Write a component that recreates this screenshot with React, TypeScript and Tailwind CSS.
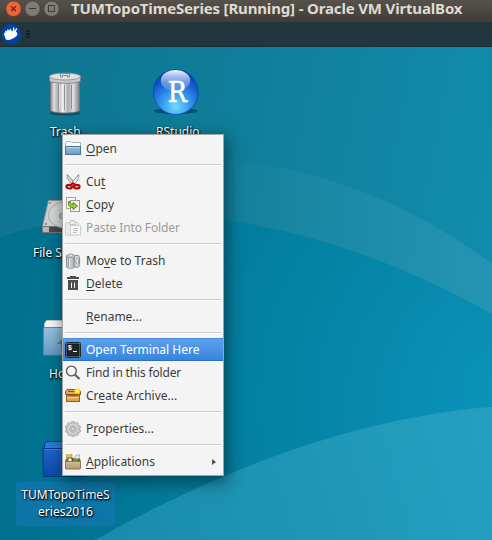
import React from "react";

type IconName =
  | "open" | "cut" | "copy" | "paste" | "trash" | "delete" | "none"
  | "terminal" | "find" | "archive" | "gear" | "apps";

type Entry = {
  icon: IconName;
  // text before the mnemonic, the mnemonic letter, and the text after it
  label: [string, string, string];
  disabled?: boolean;
  selected?: boolean;
  submenu?: boolean;
  tracking?: string;
};

const groups: Entry[][] = [
  [{ icon: "open", label: ["", "O", "pen"] }],
  [
    { icon: "cut", label: ["Cu", "t", ""] },
    { icon: "copy", label: ["", "C", "opy"] },
    { icon: "paste", label: ["Paste Into Folder", "", ""], disabled: true, tracking: "tracking-[-0.12px]" },
  ],
  [
    { icon: "trash", label: ["Mo", "v", "e to Trash"] },
    { icon: "delete", label: ["", "D", "elete"] },
  ],
  [{ icon: "none", label: ["", "R", "ename..."] }],
  [
    { icon: "terminal", label: ["Open Terminal Here", "", ""], selected: true },
    { icon: "find", label: ["Find in this folder", "", ""], tracking: "tracking-[-0.16px]" },
    { icon: "archive", label: ["Cr", "e", "ate Archive..."] },
  ],
  [{ icon: "gear", label: ["P", "r", "operties..."] }],
  [{ icon: "apps", label: ["", "A", "pplications"], submenu: true }],
];

const teeth = [0, 36, 72, 108, 144, 180, 216, 252, 288, 324];

function MenuIcon({ name }: { name: IconName }) {
  return (
    <svg viewBox="0 0 16 16" className="h-4 w-4 shrink-0">
      {name === "open" && (
        <g>
          <path d="M.5 13.5V2.5L1.5 .5H5.5L6.5 1.5H15.5V13.5Z" fill="#fafafa" stroke="#a9afb4" />
          <rect x=".5" y="5.5" width="15" height="8" fill="url(#m-blue)" stroke="#4d7695" />
          <path d="M1.5 6.5H14.5" stroke="#b5d3e8" />
        </g>
      )}
      {name === "cut" && (
        <g>
          <path d="M2.4 .6C1.6 3 3 6 7 10.4L9 8.2Z" fill="#dcdedb" stroke="#7d8082" strokeWidth=".9" />
          <path d="M13.6 .6C14.4 3 13 6 9 10.4L7 8.2Z" fill="#f0f1ef" stroke="#7d8082" strokeWidth=".9" />
          <path d="M5.5 11L8 9.2L10.500 11" fill="none" stroke="#a80808" strokeWidth="1.8" />
          <ellipse cx="4.2" cy="12.700" rx="2.800" ry="1.800" fill="#e9c9c9" stroke="#b00a0a" strokeWidth="2.1" />
          <ellipse cx="11.800" cy="12.700" rx="2.800" ry="1.800" fill="#e9c9c9" stroke="#b00a0a" strokeWidth="2.1" />
        </g>
      )}
      {name === "copy" && (
        <g>
          <rect x="1.5" y=".5" width="9" height="11" fill="#f8f8f8" stroke="#a5a7a3" />
          <rect x="5.5" y="3.5" width="9" height="11" fill="#f1f1f1" stroke="#999b97" />
          <path d="M3.5 4.5C3 8 4 10.5 8 10.5V12.5L12.5 9L8 5.5V7.5C5.8 7.5 5 6.5 5 4.5Z" fill="#9bd030" stroke="#4a8403" strokeWidth=".9" />
        </g>
      )}
      {name === "paste" && (
        <g opacity=".5">
          <rect x=".5" y="2.5" width="13" height="12.5" rx="1" fill="#ddd" stroke="#a8a8a8" />
          <path d="M4.5 4.5V2.5H5.5V.5H9.5V2.5H10.5V4.5Z" fill="#eee" stroke="#999" />
          <rect x="5.5" y="5.5" width="10" height="9.5" fill="#fafafa" stroke="#aaa" />
          <path d="M8 8.500H13M8 10.500H13M8 12.500H11.500" stroke="#888" />
        </g>
      )}
      {name === "trash" && (
        <g>
          <path d="M1.5 4V14C2 15.7 9 15.7 10 14V4Z" fill="url(#m-can)" stroke="#85888c" strokeWidth=".9" />
          <path d="M3.5 5V14M6 5V14.5M8 5V14" stroke="#8c8f93" strokeWidth=".8" />
          <path d="M1 4L1.5 2.3H4V1H7.5V2.3H10V4Z" fill="#e7e9eb" stroke="#85888b" strokeWidth=".8" />
          <rect x="9.2" y="2.2" width="5.4" height="12.2" rx="2.7" fill="#d8dadd" stroke="#7c8084" strokeWidth=".9" />
          <rect x="11" y="5.2" width="2.4" height="6" rx="1.2" fill="#f4f4f4" stroke="#888" strokeWidth=".8" />
        </g>
      )}
      {name === "delete" && (
        <g fill="#4d4d4d">
          <path d="M2 1H5V0H11V1H14V3H2Z" />
          <path fillRule="evenodd" d="M3 4H13V14H3ZM6 6.500V12H7V6.500ZM9 6.500V12H10V6.500Z" />
        </g>
      )}
      {name === "terminal" && (
        <g>
          <rect x=".5" y=".5" width="15" height="15" rx="1" fill="#9ca1a2" stroke="#23282b" />
          <rect x="2" y="2" width="12" height="12" fill="#20282b" stroke="#0c1012" />
          <text x="2.7" y="8.2" fontSize="7" fontWeight="700" fontFamily="Liberation Mono, monospace" fill="#fff">$</text>
          <path d="M8 9.500H12" stroke="#fff" />
        </g>
      )}
      {name === "find" && (
        <g fill="none" stroke="#5b5b5b">
          <circle cx="6.400" cy="6" r="4.900" strokeWidth="1.400" />
          <path d="M10 9.700L14.500 14" strokeWidth="2" />
        </g>
      )}
      {name === "archive" && (
        <g>
          <rect x="1.500" y="6" width="13" height="7.500" fill="url(#m-box)" stroke="#985d18" />
          <path d="M.5 6.500V3.500L2 1.500H14L15.500 3.500V6.500Z" fill="#e0a95b" stroke="#8f5513" />
          <path d="M3 3.500H13" stroke="#8a5a20" />
          <path d="M2.500 7.800H13.500" stroke="#814b0e" strokeWidth="1.200" />
          <path d="M2.500 9.500H13.500" stroke="#f3d6a4" />
          <circle cx="12.300" cy="3" r="3.600" fill="url(#m-glow)" />
        </g>
      )}
      {name === "gear" && (
        <g>
          {teeth.map((a) => (
            <rect key={a} x="6.700" y=".400" width="2.600" height="3.400" rx=".5" fill="#d5d5d5" stroke="#969696" strokeWidth=".8" transform={`rotate(${a} 8 8)`} />
          ))}
          <circle cx="8" cy="8" r="5.900" fill="#d8d8d8" stroke="#a5a5a5" strokeWidth=".5" />
          <circle cx="8" cy="8" r="3.500" fill="#c6c6c6" stroke="#acacac" strokeWidth=".8" />
          <circle cx="8" cy="8" r="1.500" fill="#f2f2f2" stroke="#999" strokeWidth=".8" />
        </g>
      )}
      {name === "apps" && (
        <g>
          <path d="M.5 8L1.500 4.500H14.500L15.500 8Z" fill="#655a3d" stroke="#746342" />
          <path d="M1.500 6V.5H3L4 1.500L5 .5H7V6Z" fill="#e5c42d" stroke="#a88913" strokeWidth=".6" />
          <rect x="3" y="4" width="4" height="4" fill="#fafafa" stroke="#3d3b45" strokeWidth=".8" />
          <path d="M9 5L11 1.200L14.500 .800L14 5Z" fill="#ececec" stroke="#999" strokeWidth=".7" />
          <path d="M8 7V5H13.500V7Z" fill="#67b829" stroke="#397411" strokeWidth=".6" />
          <rect x=".5" y="7.500" width="15" height="7.500" rx=".6" fill="url(#m-bag)" stroke="#8b744f" />
        </g>
      )}
    </svg>
  );
}

function MenuRow({ entry }: { entry: Entry }) {
  const [before, key, after] = entry.label;
  const tone = entry.selected
    ? "border-y border-[#2a6fc4] border-t-[#4b8ddc] bg-linear-to-b from-[#5ba0ea] to-[#3884dd] text-white"
    : entry.disabled
      ? "text-[#9b9b9b]"
      : "text-[#3c3c3c]";
  return (
    <div className={"flex h-[23px] items-center pl-0.5 pr-[7px] " + tone}>
      <MenuIcon name={entry.icon} />
      <span className={"ml-[5px] grow whitespace-pre leading-4 " + (entry.tracking ?? "")}>
        {before}
        <span className="underline decoration-1 underline-offset-2">{key}</span>
        {after}
      </span>
      {entry.submenu && (
        <svg viewBox="0 0 4 6" className="h-1.5 w-1"><path d="M0 0L4 3L0 6Z" fill="#555" /></svg>
      )}
    </div>
  );
}

function ContextMenu() {
  return (
    <div className="absolute left-[62px] top-[87px] h-[342px] w-[162px] border border-[#a3a5a5] bg-[#f4f4f4] py-0.5 shadow-[2px_5px_14px_2px_rgba(0,25,35,0.5)]">
      {groups.map((group, i) => (
        <React.Fragment key={i}>
          {i > 0 && (
            <div className="flex h-2.5 flex-col px-0.5 pt-1">
              <div className="h-px bg-[#cbcbcb]" />
              <div className="h-px bg-white" />
            </div>
          )}
          {group.map((entry) => <MenuRow key={entry.icon} entry={entry} />)}
        </React.Fragment>
      ))}
    </div>
  );
}

function Gradients() {
  return (
    <svg className="absolute h-0 w-0">
      <defs>
        <linearGradient id="m-blue" x2="0" y2="1"><stop stopColor="#9ac3df" /><stop offset="1" stopColor="#659bc3" /></linearGradient>
        <linearGradient id="m-can"><stop stopColor="#b6babd" /><stop offset=".5" stopColor="#f3f3f4" /><stop offset="1" stopColor="#b2b5b9" /></linearGradient>
        <linearGradient id="m-box" x2="0" y2="1"><stop stopColor="#efc587" /><stop offset="1" stopColor="#d9983f" /></linearGradient>
        <linearGradient id="m-bag" x2="0" y2="1"><stop stopColor="#d3bd97" /><stop offset="1" stopColor="#b59a70" /></linearGradient>
        <radialGradient id="m-glow"><stop stopColor="#fffbb0" /><stop offset=".55" stopColor="#fbe51c" /><stop offset="1" stopColor="#fbe51c" stopOpacity="0" /></radialGradient>
      </defs>
    </svg>
  );
}

function Wallpaper() {
  return (
    <svg viewBox="0 47 492 493" className="absolute inset-0 h-full w-full">
      <defs>
        <linearGradient id="w-top" gradientUnits="userSpaceOnUse" x1="0" y1="130" x2="492" y2="220"><stop stopColor="#0e7590" /><stop offset=".5" stopColor="#107f9b" /><stop offset="1" stopColor="#128cac" /></linearGradient>
        <radialGradient id="w-low" gradientUnits="userSpaceOnUse" cx="530" cy="400" r="540"><stop stopColor="#0b95bd" /><stop offset=".45" stopColor="#0583a5" /><stop offset="1" stopColor="#00708c" /></radialGradient>
        <linearGradient id="w-band" gradientUnits="userSpaceOnUse" x1="210" y1="0" x2="492" y2="0"><stop stopColor="#fff" stopOpacity="0" /><stop offset=".3" stopColor="#fff" stopOpacity=".035" /><stop offset="1" stopColor="#fff" stopOpacity=".075" /></linearGradient>
        <linearGradient id="w-hill" gradientUnits="userSpaceOnUse" x1="95" y1="540" x2="492" y2="430"><stop stopColor="#198baa" /><stop offset="1" stopColor="#259fc0" /></linearGradient>
      </defs>
      <rect y="47" width="492" height="493" fill="url(#w-top)" />
      <path d="M100 180C180 158 250 160 300 172C370 189 436 222 492 264V320H100Z" fill="url(#w-band)" />
      <path d="M0 237C70 214 150 211 224 220C320 233 412 269 492 314V540H0Z" fill="url(#w-low)" />
      <path d="M95 540C205 478 345 418 492 407V540Z" fill="url(#w-hill)" />
    </svg>
  );
}

const caption = "whitespace-nowrap text-white [text-shadow:1px_1px_2px_#000,0_1px_2px_rgba(0,0,0,0.8)]";

function Desktop() {
  return (
    <main className="relative grow overflow-hidden">
      <Wallpaper />
      <svg viewBox="0 0 34 44" className="absolute left-12 top-[25px] h-11 w-[34px]">
        <defs>
          <linearGradient id="d-can"><stop stopColor="#85868e" /><stop offset=".12" stopColor="#dedee2" /><stop offset=".27" stopColor="#a6a6ad" /><stop offset=".42" stopColor="#f2f2f3" /><stop offset=".6" stopColor="#aaaab0" /><stop offset=".8" stopColor="#d9d9dc" /><stop offset="1" stopColor="#7c7c84" /></linearGradient>
        </defs>
        <ellipse cx="17" cy="41.5" rx="15.5" ry="2" fill="#042c38" opacity=".5" />
        <path d="M2.5 8V38C3 42 31 42 31.500 38V8Z" fill="url(#d-can)" stroke="#73747a" strokeWidth=".8" />
        <path d="M10.500 13V37M16.500 13V38M23.500 13V37" stroke="#8e8e95" />
        <path d="M11.500 13V37M17.500 13V38M24.500 13V37" stroke="#e9e9ec" strokeWidth=".8" />
        <path d="M1.500 4V9C5 12 29 12 32.500 9V4Z" fill="#c9c9cd" stroke="#787980" strokeWidth=".8" />
        <ellipse cx="17" cy="4.500" rx="15.500" ry="3.500" fill="#e0e0e2" stroke="#898a8e" strokeWidth=".8" />
        <path d="M12.500 5V1.500H21.500V5H19.500V3.500H14.500V5Z" fill="#ddd" stroke="#777" strokeWidth=".8" />
      </svg>
      <span className={"absolute left-[50px] top-[77px] " + caption}>Trash</span>
      <svg viewBox="0 0 50 48" className="absolute left-[151px] top-5 h-12 w-[50px]">
        <defs>
          <radialGradient id="d-r" cx=".5" cy=".83" r=".8"><stop stopColor="#72dbff" /><stop offset=".4" stopColor="#3398ed" /><stop offset=".8" stopColor="#1353cc" /><stop offset="1" stopColor="#0735ac" /></radialGradient>
          <linearGradient id="d-shine" x2="0" y2="1"><stop stopColor="#fff" stopOpacity=".95" /><stop offset="1" stopColor="#9ac0ef" stopOpacity=".2" /></linearGradient>
        </defs>
        <ellipse cx="25" cy="44" rx="22" ry="3" fill="#064b69" />
        <circle cx="24.700" cy="25" r="22.500" fill="url(#d-r)" stroke="#0a49ba" strokeWidth=".8" />
        <ellipse cx="24.500" cy="13.500" rx="14.700" ry="10.500" fill="url(#d-shine)" />
        <text x="16.700" y="34.500" fontSize="27" fontFamily="DejaVu Serif, serif" textLength="19" lengthAdjust="spacingAndGlyphs" fill="#fff" stroke="#fff" strokeWidth=".6">R</text>
      </svg>
      <span className={"absolute left-[156px] top-[77px] " + caption}>RStudio</span>
      <svg viewBox="0 0 48 36" className="absolute left-[42px] top-[152px] h-9 w-12">
        <path d="M6.500 1.500H41L47 27.500V33.500H.5V27.500Z" fill="#d1d1d1" stroke="#929292" />
        <path d="M.5 27.500H47V33.500H.5Z" fill="#474747" stroke="#777" />
        <path d="M1 28V33H7V28Z" fill="#b8b8b8" />
        <ellipse cx="23" cy="16" rx="16.500" ry="13" fill="#d8d8d8" stroke="#aaa" />
        <ellipse cx="21" cy="17" rx="4" ry="3" fill="#bbb" stroke="#999" />
        <circle cx="4" cy="25" r="1" fill="#777" />
        <circle cx="8" cy="4" r="1" fill="#888" />
      </svg>
      <span className={"absolute left-[33px] top-[198px] " + caption}>File System</span>
      <svg viewBox="0 0 48 38" className="absolute left-[42px] top-[273px] h-[38px] w-12">
        <path d="M2.500 8V3.500L4.500 .5H25L27 3.500H46V8Z" fill="#f7f7f7" stroke="#bfc5c8" />
        <path d="M1.500 7.500H46.500V35H1.500Z" fill="url(#m-blue)" stroke="#5b88aa" />
        <path d="M15 24L24 15L33 24H29V31H19V24Z" fill="#477da2" />
      </svg>
      <span className={"absolute left-[49px] top-[319px] " + caption}>Home</span>
      <svg viewBox="0 0 48 38" className="absolute left-[42px] top-[394px] h-[38px] w-12">
        <defs><linearGradient id="d-fold" x2="0" y2="1"><stop stopColor="#1d65cb" /><stop offset="1" stopColor="#0d48ac" /></linearGradient></defs>
        <path d="M2.500 8V3.500L4.500 .5H25L27 3.500H44V8Z" fill="#287bd6" stroke="#0b3c83" />
        <path d="M.8 7.500H44.500V35.500H1.500Z" fill="url(#d-fold)" stroke="#06387f" />
        <path d="M2 8.500H44" stroke="#3a80dd" />
      </svg>
      <div className={"absolute left-4 top-[435px] flex h-11 w-[99px] flex-col items-center rounded-[3px] bg-[#0f75ab]/90 pt-1 leading-[17px] " + caption}>
        <span>TUMTopoTimeS</span>
        <span>eries2016</span>
      </div>
      <ContextMenu />
    </main>
  );
}

function WindowBar() {
  return (
    <header className="flex h-[22px] shrink-0 items-center overflow-hidden bg-linear-to-b from-[#56524b] to-[#403d38] pl-[5px]">
      <svg viewBox="0 0 55 18" className="-mt-1 h-[18px] w-[55px] shrink-0">
        <circle cx="8.500" cy="8.700" r="7.700" fill="#ee6439" stroke="#43372f" strokeWidth=".6" />
        <path d="M6.200 6.400L10.800 11M10.800 6.400L6.200 11" stroke="#582915" strokeWidth="1.300" />
        <circle cx="27.500" cy="8.700" r="7.700" fill="#7e7c74" stroke="#34322e" strokeWidth=".6" />
        <path d="M24 8.500H31" stroke="#3e3c38" />
        <circle cx="46.500" cy="8.700" r="7.700" fill="#7e7c74" stroke="#34322e" strokeWidth=".6" />
        <rect x="43.500" y="5.500" width="6" height="6" fill="none" stroke="#3e3c38" />
      </svg>
      <h1 className="-mt-1.5 ml-[11px] whitespace-nowrap font-['Noto_Sans'] text-[15px] font-bold tracking-[-0.16px] text-[#dfdbd2]">
        TUMTopoTimeSeries [Running] - Oracle VM VirtualBox
      </h1>
    </header>
  );
}

function Panel() {
  return (
    <nav className="flex h-[25px] shrink-0 items-center border-b border-[#182c33] bg-[#22373d] pl-px">
      <svg viewBox="0 0 20 20" className="-mt-px h-5 w-5">
        <circle cx="10" cy="10" r="10" fill="#0044aa" />
        <path d="M3 10.500C2.500 9 4 8.500 4.500 8.500L4 6.500L6 7.200L6.500 5L8 6.500L9.500 4.500L10.500 7L11.500 7.500L12.200 3.500L13.300 3.500L13.300 7L15.500 4L16.200 4.600L15 7.800C17 9 16.500 11 15.500 12C13 14 9 16.500 6 16C4 15.500 4.500 13.500 3 10.500Z" fill="#fff" />
      </svg>
      <div className="ml-[5px] flex flex-col gap-px">
        <i className="h-0.5 w-1 bg-[#172126]" />
        <i className="h-0.5 w-1 bg-[#172126]" />
        <i className="h-0.5 w-1 bg-[#172126]" />
      </div>
    </nav>
  );
}

export default function App() {
  return (
    <div className="flex h-[540px] w-[492px] flex-col overflow-hidden font-['Noto_Sans',sans-serif] text-[12px] leading-4">
      <Gradients />
      <WindowBar />
      <Panel />
      <Desktop />
    </div>
  );
}
